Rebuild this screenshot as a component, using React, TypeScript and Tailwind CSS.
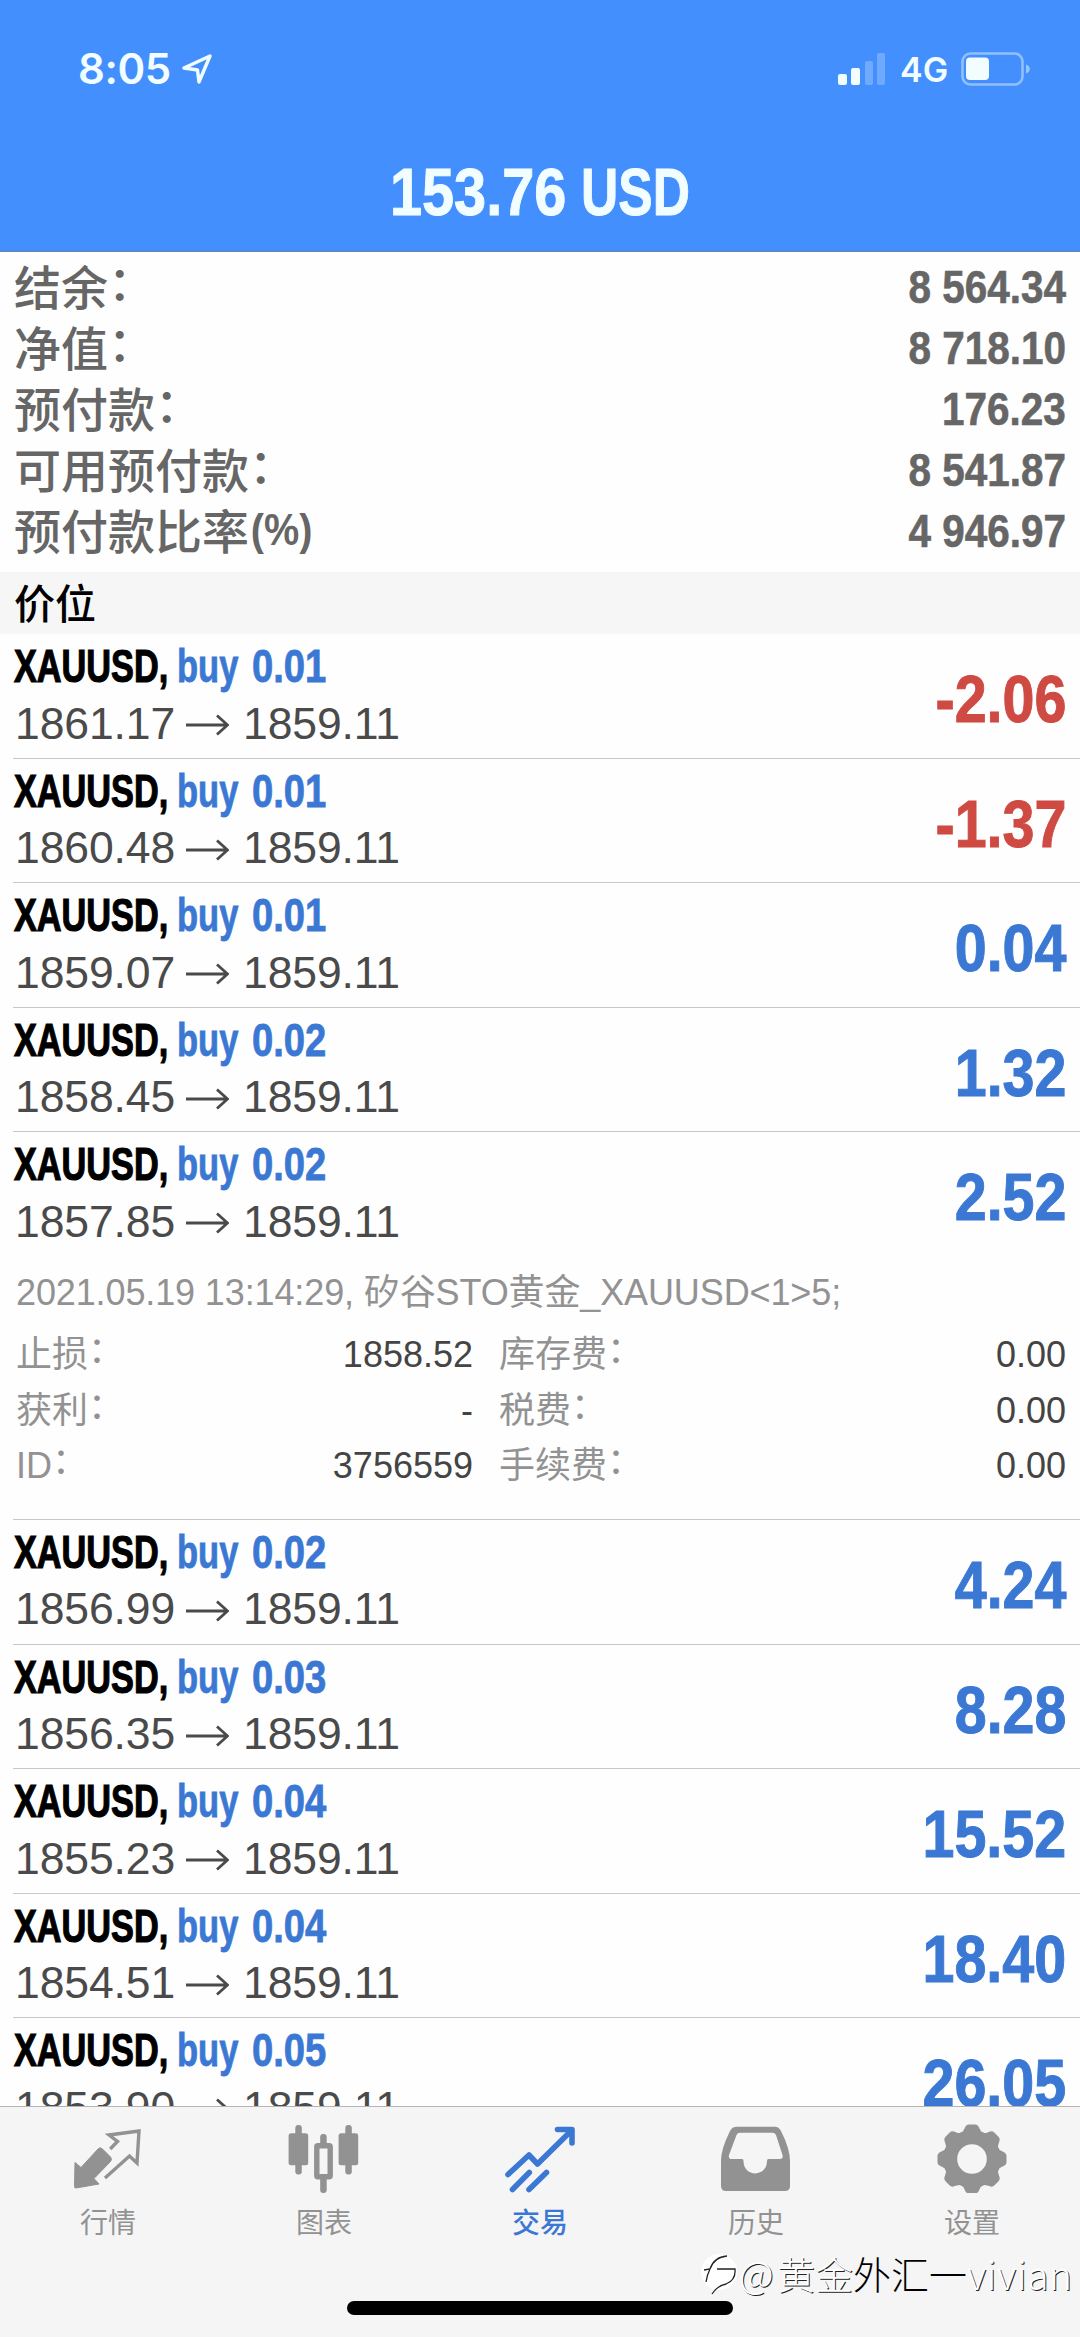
import React from 'react';

interface Position {
  lots: string;
  open: string;
  profit: string;
  expanded?: boolean;
}

const summary = [
  { label: '结余', suffix: '：', value: '8 564.34' },
  { label: '净值', suffix: '：', value: '8 718.10' },
  { label: '预付款', suffix: '：', value: '176.23' },
  { label: '可用预付款', suffix: '：', value: '8 541.87' },
  { label: '预付款比率', suffix: '(%)', value: '4 946.97' },
];

const positions: Position[] = [
  { lots: '0.01', open: '1861.17', profit: '-2.06' },
  { lots: '0.01', open: '1860.48', profit: '-1.37' },
  { lots: '0.01', open: '1859.07', profit: '0.04' },
  { lots: '0.02', open: '1858.45', profit: '1.32' },
  { lots: '0.02', open: '1857.85', profit: '2.52', expanded: true },
  { lots: '0.02', open: '1856.99', profit: '4.24' },
  { lots: '0.03', open: '1856.35', profit: '8.28' },
  { lots: '0.04', open: '1855.23', profit: '15.52' },
  { lots: '0.04', open: '1854.51', profit: '18.40' },
  { lots: '0.05', open: '1853.90', profit: '26.05' },
];

const details = [
  ['止损', '1858.52', '库存费', '0.00'],
  ['获利', '-', '税费', '0.00'],
  ['ID', '3756559', '手续费', '0.00'],
];

const StatusBar = () => (
  <div className="flex h-[136px] items-center justify-between pl-[78px] pr-[49px] pt-[2px]">
    <div className="flex items-center">
      <span className="w-[104px] font-['Inter'] text-[42px] font-semibold leading-none tracking-[-0.4px]">8:05</span>
      <svg className="h-[31px] w-[31px]" viewBox="0 0 31 31" fill="none" stroke="currentColor" strokeWidth="3.4" strokeLinejoin="round">
        <path d="M2 14 L28 2 L17 28 L15.5 16 Z" />
      </svg>
    </div>
    <div className="flex items-center">
      <svg className="h-[33px] w-[48px]" viewBox="0 0 48 33" fill="currentColor">
        <rect x="0" y="21" width="9" height="11" rx="2" />
        <rect x="13" y="15" width="9" height="17" rx="2" />
        <rect x="27" y="8" width="8" height="24" rx="2" opacity="0.25" />
        <rect x="39" y="0" width="8" height="32" rx="2" opacity="0.25" />
      </svg>
      <span className="ml-[14px] w-[61px] pt-[2px] font-['Inter'] text-[34px] font-semibold leading-none">4G</span>
      <svg className="h-[34px] w-[70px]" viewBox="0 0 70 34" fill="currentColor">
        <rect x="1.5" y="1.5" width="60" height="31" rx="8" fill="none" stroke="currentColor" strokeWidth="2.6" opacity="0.45" />
        <rect x="5" y="5.5" width="23" height="22.5" rx="4" />
        <path d="M65 12.5 C70 14 70 20 65 21.5 Z" opacity="0.5" />
      </svg>
    </div>
  </div>
);

const PositionRow = ({ lots, open, profit, expanded }: Position) => (
  <div className={`ml-[13px] shrink-0 border-b border-[#c8c8c8] ${expanded ? 'h-[387.6px]' : 'h-[124.6px]'}`}>
    <div className="flex h-[123.6px] justify-between pr-[14px]">
      <div>
        <div className="flex h-[47px] pl-px pt-[9px] text-[46px] font-bold leading-[46px]">
          <span className="w-[163px] whitespace-nowrap">
            <span className="inline-block origin-left scale-x-[0.745] text-black [-webkit-text-stroke:1.2px_black]">XAUUSD,</span>
          </span>
          <span className="w-[75px] whitespace-nowrap text-[#3b78d4]">
            <span className="inline-block origin-left scale-x-[0.75] [-webkit-text-stroke:0.8px_currentColor]">buy</span>
          </span>
          <span className="w-[80px] whitespace-nowrap text-[#3b78d4]">
            <span className="inline-block origin-left scale-x-[0.83] [-webkit-text-stroke:0.8px_currentColor]">{lots}</span>
          </span>
        </div>
        <div className="flex h-[60px] items-center pl-[2px] pt-[24px] text-[44.5px] leading-[45px] tracking-[-0.1px] text-[#4a4a4a]">
          <span className="w-[171px]">{open}</span>
          <svg className="mr-[14px] mt-[4px] h-[22px] w-[43px]" viewBox="0 0 43 22" fill="none" stroke="currentColor" strokeWidth="2.8">
            <path d="M0 11 H41 M31 1.5 L41.5 11 L31 20.5" />
          </svg>
          <span>1859.11</span>
        </div>
      </div>
      <span
        className={`mt-[32px] inline-block h-[66px] origin-right scale-x-[0.87] text-[66px] font-bold leading-[66px] [-webkit-text-stroke:1px_currentColor] ${
          profit.startsWith('-') ? 'text-[#ce4a42]' : 'text-[#3b78d4]'
        }`}
      >
        {profit}
      </span>
    </div>
    {expanded && (
      <div className="pl-[3px] pr-[14px] pt-[7px] text-[36px] text-[#929292]">
        <div className="flex h-[64px] items-start whitespace-nowrap leading-[60px] tracking-[-0.12px]">2021.05.19 13:14:29, 矽谷STO黄金_XAUUSD&lt;1&gt;5;</div>
        {details.map(([label, value, feeLabel, fee]) => (
          <div key={label} className="flex h-[55.5px] items-center leading-[55px]">
            <span className="flex w-[160px]">
              {label}
              <span className="-translate-y-[4px]">：</span>
            </span>
            <span className="w-[297px] text-right text-[#444]">{value}</span>
            <span className="ml-[26px] flex flex-1">
              {feeLabel}
              <span className="-translate-y-[4px]">：</span>
            </span>
            <span className="text-[#444]">{fee}</span>
          </div>
        ))}
      </div>
    )}
  </div>
);

const QuotesIcon = () => (
  <svg className="size-[72px]" viewBox="0 0 72 72">
    <path
      d="M3 41.5 L9 46.5 L26 28 Q28 25.5 30.5 28 L38.5 36 Q40.5 38.5 38.5 40.5 L22 57.5 L27 63 L4 67 Q2.5 67 2.5 65.5 Z"
      fill="currentColor"
      stroke="currentColor"
      strokeLinejoin="round"
    />
    <path d="M38.2 28 L45.5 20.5 L37 14 L67 10 L65 42 L57.5 35 L33 57" fill="none" stroke="currentColor" strokeWidth="3.4" />
  </svg>
);

const ChartIcon = () => (
  <svg className="size-[72px]" viewBox="0 0 72 72" fill="currentColor">
    <rect x="0.6" y="12.3" width="19.6" height="32" rx="2.5" />
    <rect x="7.3" y="4" width="6.5" height="49.5" rx="3" />
    <rect x="28.8" y="24.8" width="13.4" height="31" rx="1" fill="none" stroke="currentColor" strokeWidth="5.4" />
    <rect x="32.2" y="13" width="6.5" height="14" rx="3" />
    <rect x="32.2" y="53" width="6.5" height="19" rx="3" />
    <rect x="50.6" y="12.3" width="19.6" height="32" rx="2.5" />
    <rect x="57.3" y="4" width="6.5" height="49.5" rx="3" />
  </svg>
);

const TradeIcon = () => (
  <svg className="size-[72px]" viewBox="0 0 72 72" fill="none" stroke="currentColor" strokeWidth="5.6" strokeLinecap="round" strokeLinejoin="round">
    <path d="M4 53.5 L25 34 L33.5 43 L67 10" />
    <path d="M53.5 8.5 H68 V22" />
    <path d="M8.5 68.5 L25.3 51.5 M25 68.5 L42.5 51.5" />
  </svg>
);

const HistoryIcon = () => (
  <svg className="size-[72px]" viewBox="0 0 72 72" fill="currentColor" fillRule="evenodd">
    <path d="M17 5.7 H54.5 Q59 5.7 61 10 Q70 28 70 40 V65 Q70 70 65 70 H6 Q1 70 1 65 V40 Q1 28 10 10 Q12 5.7 17 5.7 Z M20 11.7 Q17.5 11.7 16.5 14 L9 34 Q8 38 12 38 H22 Q23.5 38 23.5 40 C23.5 56.5 47 56.5 47 40 Q47 38 48.5 38 H60 Q63.5 38 62.5 34 L56 14 Q55 11.7 52.5 11.7 Z" />
  </svg>
);

const SettingsIcon = () => (
  <svg className="size-[72px]" viewBox="0 0 72 72">
    <circle cx="36" cy="38" r="21.8" fill="none" stroke="currentColor" strokeWidth="14" />
    {[0, 45, 90, 135, 180, 225, 270, 315].map((angle) => (
      <path
        key={angle}
        d="M24.5 12.5 Q27 11 28.5 7.5 Q30 3.5 33 3.5 H39 Q42 3.5 43.5 7.5 Q45 11 47.5 12.5 L44 20 H28 Z"
        fill="currentColor"
        transform={`rotate(${angle} 36 38)`}
      />
    ))}
  </svg>
);

const tabs = [
  { label: '行情', Icon: QuotesIcon },
  { label: '图表', Icon: ChartIcon },
  { label: '交易', Icon: TradeIcon, active: true },
  { label: '历史', Icon: HistoryIcon },
  { label: '设置', Icon: SettingsIcon },
];

const App: React.FC = () => {
  return (
    <div className="relative flex h-[2337px] w-[1080px] flex-col overflow-hidden bg-[#fefefe] font-['Liberation_Sans','Noto_Sans_CJK_SC',sans-serif]">
      {/* Header */}
      <header className="h-[252px] shrink-0 border-b-2 border-[#5488d0] bg-[#438ffe] text-[#f2fdff]">
        <StatusBar />
        <div className="flex h-[114px] pl-[390px] pt-[22px] text-[67px] font-bold leading-[67px] [-webkit-text-stroke:1px_currentColor]">
          <span className="w-[191px] whitespace-nowrap">
            <span className="inline-block origin-left scale-x-[0.86]">153.76</span>
          </span>
          <span className="inline-block origin-left scale-x-[0.77]">USD</span>
        </div>
      </header>

      {/* Account summary */}
      <section className="h-[320px] shrink-0 px-[14px] pt-[5px] text-[#666]">
        {summary.map(({ label, suffix, value }) => (
          <div key={label} className="flex h-[61px] items-center justify-between">
            <span className="-mt-[5px] flex items-center font-['Noto_Sans_CJK_SC'] text-[47px] font-medium leading-[56px]">
              {label}
              {suffix === '：' ? (
                <span className="-translate-y-[5px]">{suffix}</span>
              ) : (
                <span className="inline-block origin-left scale-x-[0.88] pl-[2px] pt-[2px] font-['Liberation_Sans'] text-[45px] font-bold">{suffix}</span>
              )}
            </span>
            <span className="inline-block origin-right scale-x-[0.88] text-[46px] font-bold leading-[61px] [-webkit-text-stroke:0.6px_currentColor]">{value}</span>
          </div>
        ))}
      </section>

      <h2 className="h-[62px] shrink-0 bg-[#f6f6f6] pl-[14px] font-['Noto_Sans_CJK_SC'] text-[41px] font-medium leading-[58px] text-black">价位</h2>

      {/* Open positions */}
      <main className="flex min-h-0 flex-1 flex-col overflow-hidden">
        {positions.map((position) => (
          <PositionRow key={position.open} {...position} />
        ))}
      </main>

      {/* Tab bar */}
      <nav className="flex h-[231px] shrink-0 flex-col items-center border-t border-[#b4b4b6] bg-[#f5f5f5]">
        <div className="grid h-[194px] w-full grid-cols-5 pt-[14px]">
          {tabs.map(({ label, Icon, active }) => (
            <div key={label} className={`flex flex-col items-center ${active ? 'font-medium text-[#3b78d4]' : 'text-[#929292]'}`}>
              <Icon />
              <span className="mt-[8px] font-['Noto_Sans_CJK_SC'] text-[28px] leading-[40px]">{label}</span>
            </div>
          ))}
        </div>
        <div className="h-[14px] w-[386px] rounded-full bg-black" />
      </nav>

      {/* Watermark */}
      <div className="absolute left-[699px] top-[2248px] flex h-[50px] items-center text-white">
        <svg className="h-[44px] w-[40px]" viewBox="0 0 40 44">
          <circle cx="20" cy="21" r="18" fill="white" />
          <path d="M5 19 L11 18 Q15 6 28 5 M11 18 Q8 24 7 31 M18 18 H36 Q37 29 27 33 Q18 35 13 43" fill="none" stroke="#222" strokeWidth="1.3" />
        </svg>
        <div className="flex whitespace-nowrap font-['Noto_Sans_CJK_SC'] text-[38px] font-light leading-[50px] [text-shadow:1px_1px_0.5px_#222]">
          <span className="w-[38px]">@</span>
          <span className="w-[76px]">黄金</span>
          <span className="w-[76px] text-black [text-shadow:none]">外汇</span>
          <span className="w-[38px] text-black [text-shadow:none]">一</span>
          <span className="text-[39px] tracking-[0.5px]">vivian</span>
        </div>
      </div>
    </div>
  );
};

export default App;
